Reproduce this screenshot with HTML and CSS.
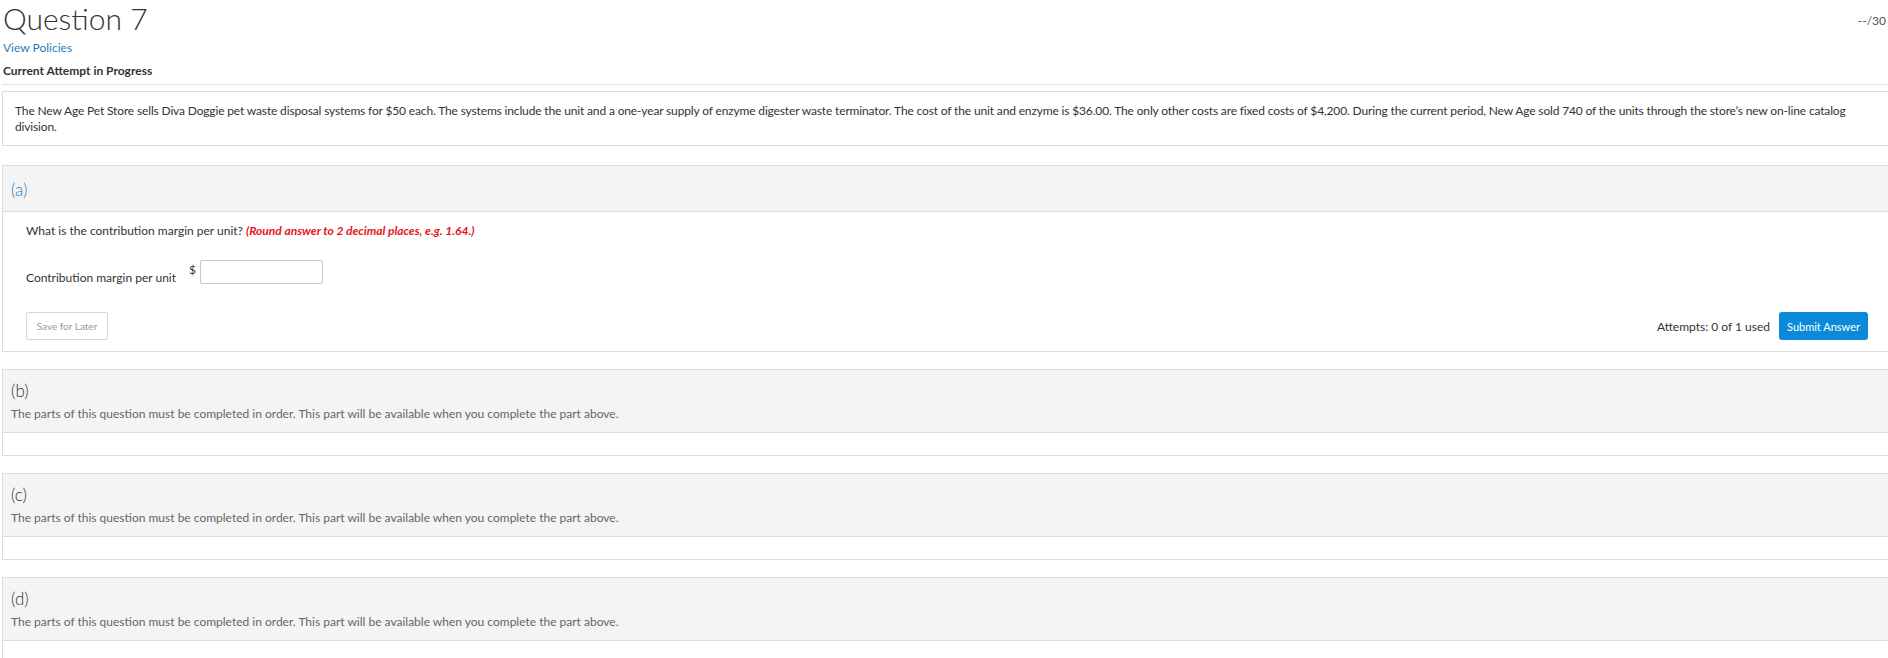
FILE: index.html
```html
<!DOCTYPE html>
<html lang="en">
<head>
    <meta charset="UTF-8">
    <meta name="viewport" content="width=device-width, initial-scale=1.0">
    <title>Question 7</title>
    <link rel="stylesheet" href="styles.css">
</head>
<body>
    <div class="page">
        <div class="question-top">
            <div class="title-row">
                <h1>Question 7</h1>
                <span class="score">--/30</span>
            </div>
            <a class="policies" href="#">View Policies</a>
            <div class="attempt-status">Current Attempt in Progress</div>
        </div>

        <div class="intro">
            The New Age Pet Store sells Diva Doggie pet waste disposal systems for $50 each. The systems include the unit and a one-year supply of enzyme digester waste terminator. The cost of the unit and enzyme is $36.00. The only other costs are fixed costs of $4,200. During the current period, New Age sold 740 of the units through the store’s new on-line catalog division.
        </div>

        <section class="part open">
            <div class="part-head">
                <span class="part-label">(a)</span>
            </div>
            <div class="part-body">
                <p class="prompt">What is the contribution margin per unit? <em class="hint">(Round answer to 2 decimal places, e.g. 1.64.)</em></p>
                <div class="answer-row">
                    <label for="cm-unit">Contribution margin per unit</label>
                    <span class="currency">$</span>
                    <input type="text" id="cm-unit">
                </div>
                <div class="actions">
                    <button class="save">Save for Later</button>
                    <div class="submit-group">
                        <span class="attempts">Attempts: 0 of 1 used</span>
                        <button class="submit">Submit Answer</button>
                    </div>
                </div>
            </div>
        </section>

        <section class="part">
            <div class="part-head">
                <span class="part-label">(b)</span>
                <div class="locked-msg">The parts of this question must be completed in order. This part will be available when you complete the part above.</div>
            </div>
            <div class="part-body empty"></div>
        </section>

        <section class="part">
            <div class="part-head">
                <span class="part-label">(c)</span>
                <div class="locked-msg">The parts of this question must be completed in order. This part will be available when you complete the part above.</div>
            </div>
            <div class="part-body empty"></div>
        </section>

        <section class="part">
            <div class="part-head">
                <span class="part-label">(d)</span>
                <div class="locked-msg">The parts of this question must be completed in order. This part will be available when you complete the part above.</div>
            </div>
            <div class="part-body empty"></div>
        </section>
    </div>
</body>
</html>
```

FILE: styles.css
```css
body {
    font-family: Lato, "Open Sans", sans-serif;
    color: #333;
    background-color: #fff;
    margin: 0;
    padding: 0;
    overflow: hidden;
}

.page {
    padding: 0 0 0 2px;
}

.question-top {
    padding-bottom: 5px;
    border-bottom: 1px solid #e3e3e3;
}

.title-row {
    display: flex;
    justify-content: space-between;
    align-items: center;
    padding-top: 1px;
}

h1 {
    margin: 0 0 0 1px;
    font-size: 30px;
    font-weight: 300;
    line-height: 35px;
    color: #333;
}

.score {
    font-size: 12px;
    color: #555;
    margin-right: 2px;
    margin-top: 3px;
}

.policies {
    display: block;
    margin: 4px 0 0 1px;
    font-size: 12px;
    line-height: 16px;
    color: #2b7bba;
    text-decoration: none;
}

.attempt-status {
    margin: 7px 0 0 1px;
    font-size: 12px;
    line-height: 16px;
    font-weight: bold;
    color: #333;
}

.intro {
    margin-top: 6px;
    padding: 11px 12px 10px 12px;
    border: 1px solid #dcdcdc;
    border-right: none;
    font-size: 12px;
    line-height: 16px;
    letter-spacing: -0.15px;
    color: #333;
}

.part {
    margin-top: 17px;
    border: 1px solid #dcdcdc;
    border-right: none;
}

.part.open {
    margin-top: 19px;
}

.part-head {
    background-color: #f4f4f4;
    border-bottom: 1px solid #dcdcdc;
    padding: 11px 12px 10px 8px;
}

.part-label {
    display: block;
    font-size: 17px;
    font-weight: 300;
    line-height: 20px;
    color: #333;
}

.open .part-head {
    padding: 14px 12px 11px 8px;
}

.open .part-label {
    color: #1a7fc5;
}

.locked-msg {
    margin-top: 5px;
    font-size: 12px;
    line-height: 16px;
    color: #666;
}

.part-body {
    padding: 11px 20px 11px 23px;
}

.part-body.empty {
    padding: 0;
    height: 22px;
}

.prompt {
    margin: 0;
    font-size: 12px;
    line-height: 16px;
    color: #333;
}

.hint {
    color: #e8141b;
    font-weight: bold;
}

.answer-row {
    display: flex;
    align-items: flex-end;
    margin-top: 21px;
    height: 26px;
}

.answer-row label {
    font-size: 12px;
    line-height: 16px;
    color: #333;
}

.currency {
    align-self: flex-start;
    margin: 4px 4px 0 13px;
    font-size: 12px;
    line-height: 12px;
    color: #333;
}

.answer-row input {
    align-self: flex-start;
    box-sizing: border-box;
    width: 123px;
    height: 24px;
    padding: 0 4px;
    border: 1px solid #c8c8c8;
    border-radius: 2px;
}

.actions {
    display: flex;
    justify-content: space-between;
    align-items: center;
    margin-top: 26px;
}

.save {
    width: 82px;
    height: 28px;
    padding: 0;
    font-family: Lato, sans-serif;
    font-size: 10px;
    color: #999;
    background-color: #fff;
    border: 1px solid #d8d8d8;
    border-radius: 2px;
}

.submit-group {
    display: flex;
    align-items: center;
    gap: 9px;
}

.attempts {
    font-size: 12px;
    color: #333;
}

.submit {
    width: 89px;
    height: 28px;
    padding: 0;
    font-family: Lato, sans-serif;
    font-size: 11px;
    color: #fff;
    background-color: #0b8ad9;
    border: none;
    border-radius: 3px;
}
```
